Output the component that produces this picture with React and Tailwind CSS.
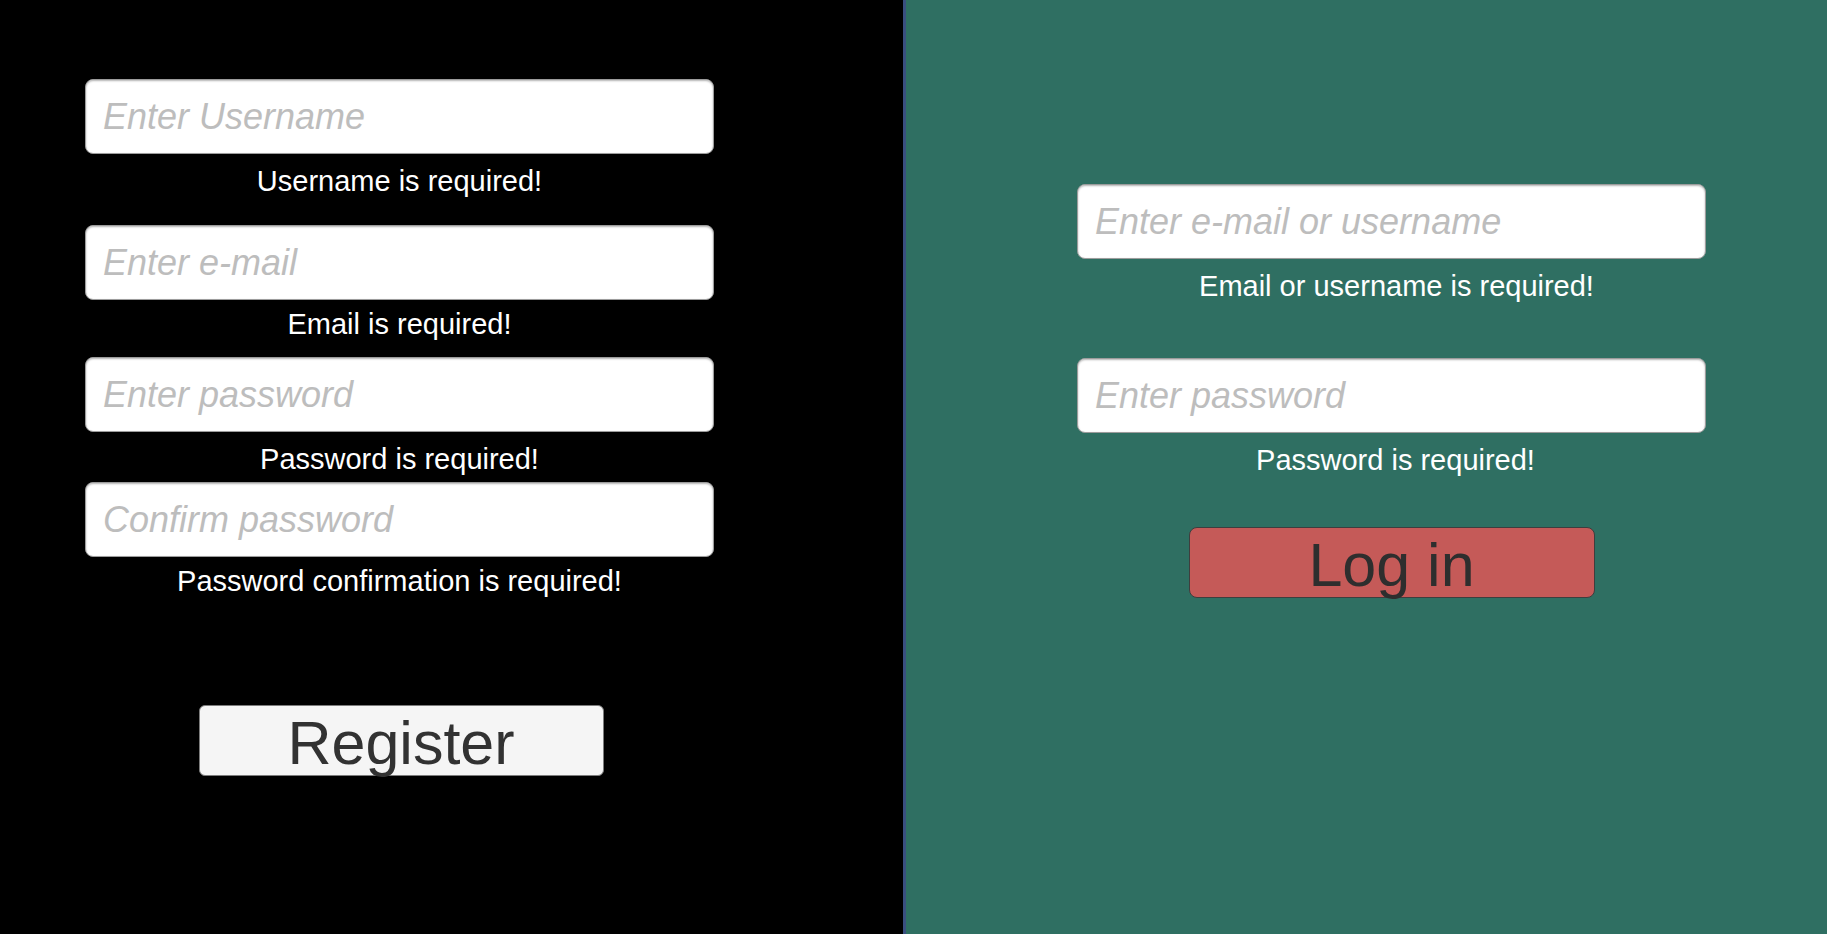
export default function App() {
  const inputCls =
    "block w-full h-[75px] px-[17px] bg-white rounded-[8px] border border-[#9c9c9c] shadow-[inset_0_1px_2px_rgba(0,0,0,0.3)] text-[36px] italic text-[#333] placeholder:text-[#bdbdbd] outline-none";
  const errCls = "text-center text-white text-[29px] leading-[34px]";
  const font = { fontFamily: '"Liberation Sans", Arial, sans-serif' };
  return (
    <div className="flex w-full h-screen overflow-hidden" style={font}>
      <div className="w-[906px] shrink-0 h-full bg-black border-r-[3px] border-[#3a4f80]">
        <div className="ml-[85px] w-[629px] pt-[79px] flex flex-col">
          <input className={inputCls} placeholder="Enter Username" />
          <div className={`${errCls} mt-[10px]`}>Username is required!</div>
          <input className={`${inputCls} mt-[27px]`} placeholder="Enter e-mail" />
          <div className={`${errCls} mt-[7px]`}>Email is required!</div>
          <input className={`${inputCls} mt-[16px]`} type="password" placeholder="Enter password" />
          <div className={`${errCls} mt-[10px]`}>Password is required!</div>
          <input className={`${inputCls} mt-[6px]`} type="password" placeholder="Confirm password" />
          <div className={`${errCls} mt-[7px]`}>Password confirmation is required!</div>
          <button className="self-center ml-[3px] mt-[107px] w-[405px] h-[71px] pt-[7px] bg-[#f5f5f5] border border-[#7c7c7c] rounded-[6px] text-[61px] leading-[60px] text-[#323232] flex justify-center items-start">
            Register
          </button>
        </div>
      </div>
      <div className="flex-1 h-full bg-[#2f6f62]">
        <div className="ml-[171px] w-[629px] pt-[184px] flex flex-col">
          <input className={inputCls} placeholder="Enter e-mail or username" />
          <div className={`${errCls} mt-[10px] pl-[10px]`}>Email or username is required!</div>
          <input className={`${inputCls} mt-[55px]`} type="password" placeholder="Enter password" />
          <div className={`${errCls} mt-[10px] pl-[8px]`}>Password is required!</div>
          <button className="self-center mt-[50px] w-[406px] h-[71px] pt-[7px] bg-[#c55a58] border border-[#3e3e3e] rounded-[8px] text-[61px] leading-[60px] text-[#2e2e2e] flex justify-center items-start">
            Log in
          </button>
        </div>
      </div>
    </div>
  );
}
